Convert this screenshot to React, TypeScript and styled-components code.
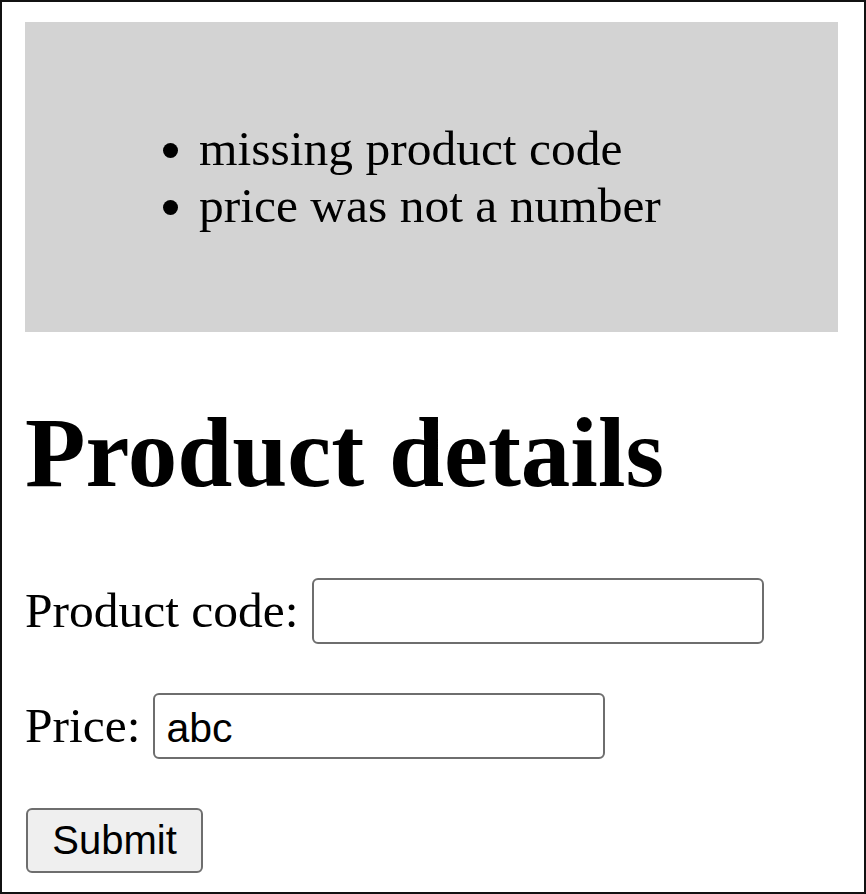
import React from "react";
import styled, { createGlobalStyle } from "styled-components";

const GlobalStyle = createGlobalStyle`
  html, body {
    margin: 0;
    padding: 0;
    background: #ffffff;
  }
  body {
    font-family: "Liberation Serif", "Times New Roman", serif;
    color: #000000;
  }
`;

const Frame = styled.div`
  box-sizing: border-box;
  width: 866px;
  height: 894px;
  border: 2px solid #111111;
  padding: 20px 26px 0 23px;
  overflow: hidden;
`;

const ErrorBox = styled.div`
  background: #d3d3d3;
  height: 310px;
  box-sizing: border-box;
  padding: 0 48px;
  overflow: hidden;
`;

const ErrorList = styled.ul`
  margin: 98px 0 0;
  padding-left: 126px;
  list-style: disc;
  font-size: 49.5px;
  line-height: 57px;
`;

const Heading = styled.h1`
  margin: 66px 0 0;
  font-size: 99px;
  font-weight: bold;
  line-height: 110px;
`;

const Form = styled.form`
  display: flex;
  flex-direction: column;
  align-items: flex-start;
  gap: 49px;
  margin-top: 70px;
`;

const FieldRow = styled.div`
  display: flex;
  align-items: baseline;
  gap: 13px;
  font-size: 49.5px;
  line-height: 55px;
`;

const Label = styled.label`
  font-family: "Liberation Serif", "Times New Roman", serif;
`;

const TextInput = styled.input`
  box-sizing: border-box;
  width: 452px;
  height: 66px;
  border: 2px solid #6e6e6e;
  border-radius: 6px;
  padding: 4px 11px 0;
  font-family: "Liberation Sans", Arial, sans-serif;
  font-size: 41px;
  color: #000000;
  background: #ffffff;
  outline: none;
`;

const SubmitButton = styled.button`
  box-sizing: border-box;
  width: 177px;
  height: 65px;
  margin-left: 1px;
  border: 2px solid #6e6e6e;
  border-radius: 6px;
  background: #efefef;
  font-family: "Liberation Sans", Arial, sans-serif;
  font-size: 40px;
  color: #000000;
  padding: 0;
`;

export default function App() {
  return (
    <>
      <GlobalStyle />
      <Frame>
        <ErrorBox>
          <ErrorList>
            <li>missing product code</li>
            <li>price was not a number</li>
          </ErrorList>
        </ErrorBox>
        <Heading>Product details</Heading>
        <Form onSubmit={(e) => e.preventDefault()}>
          <FieldRow>
            <Label htmlFor="code">Product code:</Label>
            <TextInput id="code" type="text" defaultValue="" />
          </FieldRow>
          <FieldRow>
            <Label htmlFor="price">Price:</Label>
            <TextInput id="price" type="text" defaultValue="abc" />
          </FieldRow>
          <SubmitButton type="submit">Submit</SubmitButton>
        </Form>
      </Frame>
    </>
  );
}
